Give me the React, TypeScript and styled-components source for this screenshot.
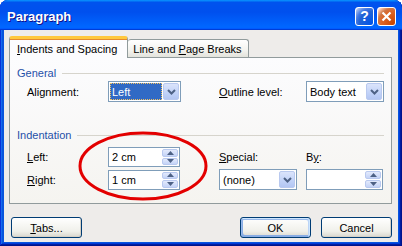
import React from 'react';
import styled, { createGlobalStyle, css } from 'styled-components';

const GlobalStyle = createGlobalStyle`
  html, body {
    margin: 0;
    padding: 0;
    background: #ffffff;
  }
  body {
    font-family: 'Liberation Sans', Arial, sans-serif;
    font-size: 11px;
    color: #000;
  }
`;

const Window = styled.div`
  position: relative;
  width: 402px;
  height: 246px;
  box-sizing: border-box;
  display: flex;
  flex-direction: column;
  background: #0855dd;
  border-radius: 8px 8px 0 0;
  overflow: hidden;
  box-shadow:
    inset -1px -1px #00138c,
    inset 1px 1px #0831d9,
    inset -2px -2px #001ea0,
    inset 2px 2px #166aee,
    inset -3px -3px #003bda,
    inset 3px 3px #0855dd;
`;

const TitleBar = styled.div`
  height: 30px;
  flex: none;
  display: flex;
  align-items: center;
  justify-content: space-between;
  padding: 2px 6px 0 7px;
  box-sizing: border-box;
  background: linear-gradient(
    180deg,
    #0997ff,
    #0053ee 8%,
    #0050ee 40%,
    #0066ff 88%,
    #0066ff 93%,
    #005bff 95%,
    #003dd7 96%,
    #003dd7
  );
`;

const Title = styled.span`
  color: #fff;
  font-weight: bold;
  font-size: 13px;
  letter-spacing: 0;
  text-shadow: 1px 1px #0f1089;
`;

const Controls = styled.div`
  display: flex;
  gap: 3px;
`;

const CtrlButton = styled.div<{ $kind: 'help' | 'close' }>`
  width: 19px;
  height: 19px;
  box-sizing: border-box;
  border: 1px solid #fff;
  border-radius: 3px;
  display: flex;
  align-items: center;
  justify-content: center;
  color: #fff;
  font-weight: bold;
  font-size: 14px;
  ${({ $kind }) =>
    $kind === 'help'
      ? css`
          background: radial-gradient(circle at 90% 90%, #0054e9 0%, #2263d5 55%, #4479e4 70%, #a3bbec 90%, #fff 100%);
        `
      : css`
          background: radial-gradient(circle at 90% 90%, #cc4600 0%, #dc6527 55%, #cd7546 70%, #ffccb2 90%, #fff 100%);
        `}
`;

const Body = styled.div`
  flex: 1;
  margin: 0 4px 4px;
  background: #eeecea;
  padding: 6px 6px 0 5px;
  display: flex;
  flex-direction: column;
`;

const TabStrip = styled.div`
  display: flex;
  align-items: flex-end;
  height: 22px;
  margin-bottom: -1px;
  position: relative;
  z-index: 1;
`;

const Tab = styled.div<{ $active?: boolean }>`
  box-sizing: border-box;
  display: flex;
  align-items: center;
  border: 1px solid #919b9c;
  border-bottom: none;
  border-radius: 3px 3px 0 0;
  ${({ $active }) =>
    $active
      ? css`
          height: 22px;
          padding: 0 10px 0 7px;
          background: #fcfcfe;
          border-top: 3px solid #ffc83c;
          box-shadow: inset 0 1px #e68b2c;
        `
      : css`
          height: 18px;
          margin-bottom: 1px;
          padding: 1px 6px 0 5px;
          background: linear-gradient(180deg, #ffffff, #f3f3ef 60%, #e3e3dc);
          border-left: none;
        `}
`;

const Panel = styled.div`
  border: 1px solid #919b9c;
  background: linear-gradient(180deg, #fcfcfe, #f5f4f0);
  padding: 8px 7px 13px 0;
  display: flex;
  flex-direction: column;
`;

const GroupHeader = styled.div<{ $top?: number }>`
  display: flex;
  align-items: center;
  gap: 6px;
  height: 14px;
  margin-left: 7px;
  margin-top: ${({ $top }) => $top ?? 0}px;
  color: #1f50a8;

  &::after {
    content: '';
    flex: 1;
    height: 1px;
    background: #d6d4cc;
  }
`;

const FieldGrid = styled.div<{ $top: number }>`
  display: grid;
  grid-template-columns: 81px 111px 87px 78px;
  grid-auto-rows: auto;
  row-gap: 2px;
  padding-left: 17px;
  margin-top: ${({ $top }) => $top}px;
  align-items: center;
`;

const Label = styled.span`
  white-space: nowrap;
`;

const Key = styled.span`
  text-decoration: underline;
  text-underline-offset: 1px;
`;

const Box = styled.div<{ $w: number; $h: number }>`
  width: ${({ $w }) => $w}px;
  height: ${({ $h }) => $h}px;
  box-sizing: border-box;
  border: 1px solid #7f9db9;
  background: #fff;
  display: flex;
  align-items: stretch;
  padding: 1px;
`;

const Value = styled.div<{ $selected?: boolean }>`
  flex: 1;
  display: flex;
  align-items: center;
  padding-left: 2px;
  margin-right: 1px;
  ${({ $selected }) =>
    $selected &&
    css`
      background: #316ac5;
      color: #fff;
      outline: 1px dotted #f0c060;
      outline-offset: -1px;
    `}
`;

const DropButton = styled.div`
  width: 16px;
  box-sizing: border-box;
  border: 1px solid #b9c9ef;
  border-radius: 2px;
  background: linear-gradient(180deg, #dbe4fb, #c1d2f8 60%, #b3c6f3);
  display: flex;
  align-items: center;
  justify-content: center;
`;

const SpinButtons = styled.div`
  width: 16px;
  display: flex;
  flex-direction: column;
  gap: 1px;
`;

const SpinHalf = styled.div`
  flex: 1;
  box-sizing: border-box;
  border: 1px solid #b9c9ef;
  border-radius: 2px;
  background: linear-gradient(180deg, #e3eafc, #c4d3f7);
  display: flex;
  align-items: center;
  justify-content: center;
`;

const ButtonRow = styled.div`
  display: flex;
  align-items: center;
  margin-top: 13px;
  padding-left: 2px;
  gap: 10px;
`;

const PushButton = styled.div<{ $default?: boolean }>`
  width: 71px;
  height: 21px;
  box-sizing: border-box;
  border: 1px solid #003c74;
  border-radius: 3px;
  display: flex;
  align-items: center;
  justify-content: center;
  background: linear-gradient(180deg, #ffffff, #f0f0ea 70%, #d8d6ce);
  box-shadow: inset -1px -1px #d6d0c5;
  ${({ $default }) =>
    $default &&
    css`
      box-shadow:
        inset -1px 1px #cee7ff,
        inset 1px 2px #98b8ea,
        inset -2px 2px #bcd4f6,
        inset 1px -1px #89ade4,
        inset 2px -2px #89ade4;
    `}
`;

const Spacer = styled.div`
  flex: 1;
`;

const Annotation = styled.svg`
  position: absolute;
  left: 77px;
  top: 130px;
  pointer-events: none;
`;

const Chevron = () => (
  <svg width="9" height="6" viewBox="0 0 9 6">
    <path d="M1 1 L4.5 4.5 L8 1" fill="none" stroke="#4d6185" strokeWidth="2" />
  </svg>
);

const Arrow = ({ up }: { up?: boolean }) => (
  <svg width="7" height="4" viewBox="0 0 7 4">
    <path d={up ? 'M0 4 L3.5 0 L7 4 Z' : 'M0 0 L3.5 4 L7 0 Z'} fill="#4d6185" />
  </svg>
);

const Select = ({ w, h, value, selected }: { w: number; h: number; value: string; selected?: boolean }) => (
  <Box $w={w} $h={h}>
    <Value $selected={selected}>{value}</Value>
    <DropButton>
      <Chevron />
    </DropButton>
  </Box>
);

const Spin = ({ w, h, value }: { w: number; h: number; value: string }) => (
  <Box $w={w} $h={h}>
    <Value>{value}</Value>
    <SpinButtons>
      <SpinHalf>
        <Arrow up />
      </SpinHalf>
      <SpinHalf>
        <Arrow />
      </SpinHalf>
    </SpinButtons>
  </Box>
);

const App = () => (
  <>
    <GlobalStyle />
    <Window>
      <TitleBar>
        <Title>Paragraph</Title>
        <Controls>
          <CtrlButton $kind="help">?</CtrlButton>
          <CtrlButton $kind="close">
            <svg width="11" height="11" viewBox="0 0 11 11">
              <path d="M1.5 1.5 L9.5 9.5 M9.5 1.5 L1.5 9.5" stroke="#fff" strokeWidth="2.2" />
            </svg>
          </CtrlButton>
        </Controls>
      </TitleBar>

      <Body>
        <TabStrip>
          <Tab $active>
            <span>
              <Key>I</Key>ndents and Spacing
            </span>
          </Tab>
          <Tab>
            <span>
              Line and <Key>P</Key>age Breaks
            </span>
          </Tab>
        </TabStrip>

        <Panel>
          <GroupHeader>General</GroupHeader>
          <FieldGrid $top={1}>
            <Label>
              Ali<Key>g</Key>nment:
            </Label>
            <Select w={73} h={21} value="Left" selected />
            <Label>
              <Key>O</Key>utline level:
            </Label>
            <Select w={78} h={21} value="Body text" />
          </FieldGrid>

          <GroupHeader $top={26}>Indentation</GroupHeader>
          <FieldGrid $top={5}>
            <Label>
              <Key>L</Key>eft:
            </Label>
            <Spin w={72} h={20} value="2 cm" />
            <Label>
              <Key>S</Key>pecial:
            </Label>
            <Label>
              B<Key>y</Key>:
            </Label>

            <Label>
              <Key>R</Key>ight:
            </Label>
            <Spin w={72} h={20} value="1 cm" />
            <Select w={78} h={21} value="(none)" />
            <Spin w={77} h={21} value="" />
          </FieldGrid>
        </Panel>

        <ButtonRow>
          <PushButton>
            <span>
              <Key>T</Key>abs...
            </span>
          </PushButton>
          <Spacer />
          <PushButton $default>OK</PushButton>
          <PushButton>Cancel</PushButton>
        </ButtonRow>
      </Body>

      <Annotation width="132" height="72" viewBox="0 0 132 72">
        <ellipse cx="66" cy="36" rx="63" ry="33" fill="none" stroke="#e30000" strokeWidth="3" />
      </Annotation>
    </Window>
  </>
);

export default App;
